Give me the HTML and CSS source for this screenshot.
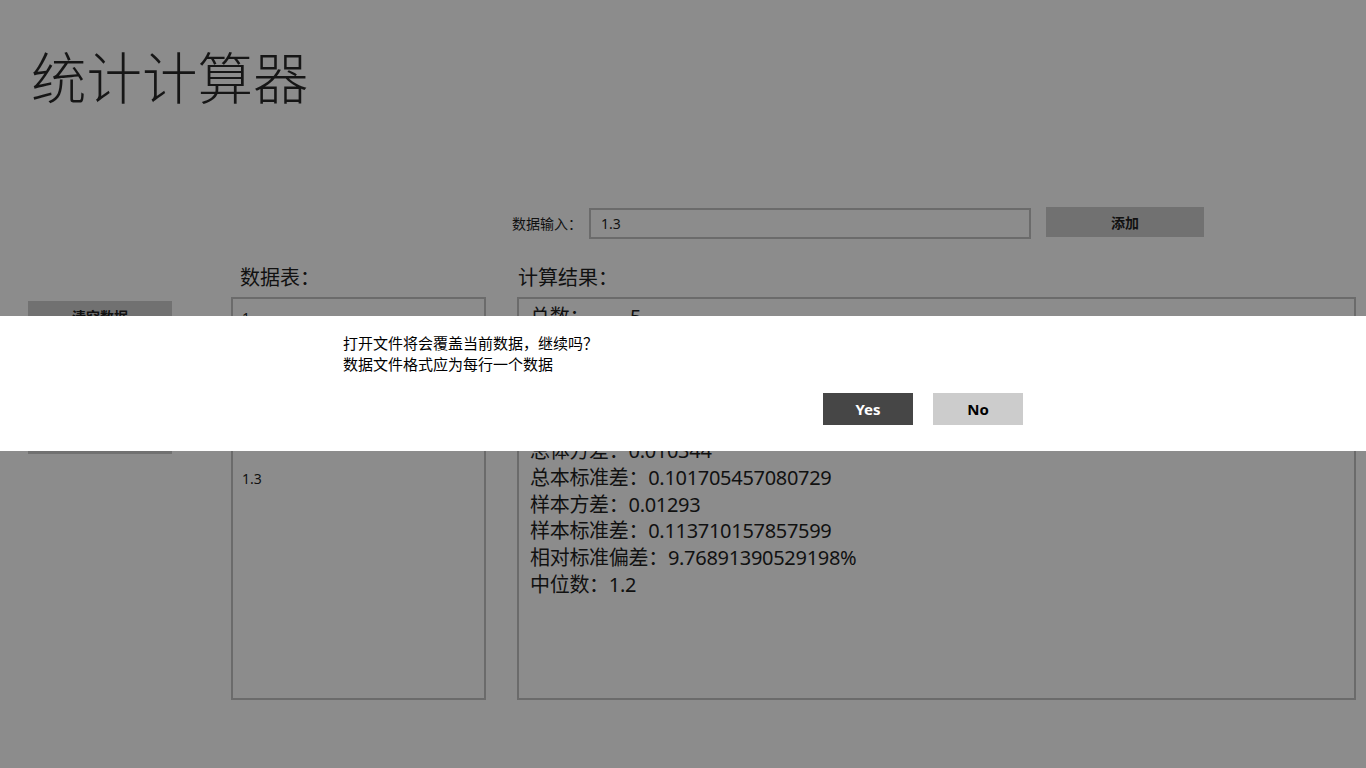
FILE: index.html
```html
<!doctype html>
<html>
  <head>
    <meta charset="utf-8">
    <title>统计计算器</title>
    <link rel="stylesheet" href="styles.css">
  </head>
  <body>
    <h1 class="title">统计计算器</h1>

    <div class="main">
      <div class="input-row">
        <label class="input-label" for="dataInput">数据输入：</label>
        <input class="data-input" id="dataInput" type="text" value="1.3">
        <button class="add-button">添加</button>
      </div>

      <div class="side-buttons">
        <button class="side-button">清空数据</button>
        <button class="side-button">删除选中</button>
        <button class="side-button">打开文件</button>
        <button class="side-button">保存文件</button>
      </div>

      <h2 class="panel-title list-title">数据表：</h2>
      <div class="box data-list">
        <div class="list-item">1</div>
        <div class="list-item">1.2</div>
        <div class="list-item">1.11</div>
        <div class="list-item">1.21</div>
        <div class="list-item">1.3</div>
      </div>

      <h2 class="panel-title result-title">计算结果：</h2>
      <div class="box results">
        <div class="result-line">总数：<span class="count-value">5</span></div>
        <div class="result-line">总和：5.82</div>
        <div class="result-line">平均数：1.164</div>
        <div class="result-line">最大值：1.3</div>
        <div class="result-line">最小值：1</div>
        <div class="result-line">总体方差：0.010344</div>
        <div class="result-line">总本标准差：0.101705457080729</div>
        <div class="result-line">样本方差：0.01293</div>
        <div class="result-line">样本标准差：0.113710157857599</div>
        <div class="result-line">相对标准偏差：9.76891390529198%</div>
        <div class="result-line">中位数：1.2</div>
      </div>
    </div>

    <div class="dialog">
      <div class="dialog-content">
        <p class="dialog-message">打开文件将会覆盖当前数据，继续吗？</p>
        <p class="dialog-message">数据文件格式应为每行一个数据</p>
        <div class="dialog-actions">
          <button class="dialog-button yes-button">Yes</button>
          <button class="dialog-button no-button">No</button>
        </div>
      </div>
    </div>
  </body>
</html>
```

FILE: styles.css
```css
body {
  margin: 0;
  padding: 0;
  height: 768px;
  overflow: hidden;
  background-color: #8c8c8c;
  color: #111;
  font-family: "Noto Sans", "Noto Sans CJK SC", sans-serif;
}
button {
  font-family: "Noto Sans", "Noto Sans CJK SC", sans-serif;
}
.title {
  margin: 0;
  padding: 49px 0 0 31px;
  font-size: 55.5px;
  line-height: 58px;
  font-weight: 300;
  color: #161616;
}
.main {
  display: grid;
  grid-template-columns: 144px 59px 255px 31px 839px;
  grid-template-rows: 32px auto 403px;
  margin-top: 100px;
  padding-left: 28px;
}
.input-row {
  grid-column: 5;
  grid-row: 1;
  display: flex;
  align-items: flex-start;
  margin-left: -5px;
}
.input-label {
  width: 77px;
  font-size: 14px;
  line-height: 32px;
  margin-top: 1px;
}
.data-input {
  width: 442px;
  height: 31px;
  margin: 1px 0 0 0;
  box-sizing: border-box;
  border: 2px solid #6b6b6b;
  background-color: transparent;
  padding: 0 10px;
  font-family: "Noto Sans", "Noto Sans CJK SC", sans-serif;
  font-size: 14px;
  color: #111;
  outline: none;
}
.add-button {
  width: 158px;
  height: 30px;
  margin-left: 15px;
  border: none;
  background-color: #717171;
  color: #111;
  font-size: 14px;
  font-weight: bold;
}
.side-buttons {
  grid-column: 1;
  grid-row: 3;
  display: flex;
  flex-direction: column;
  gap: 11px;
  padding-top: 4px;
}
.side-button {
  height: 30px;
  border: none;
  background-color: #717171;
  color: #111;
  font-size: 14px;
  font-weight: bold;
}
.panel-title {
  grid-row: 2;
  margin: 26px 0 6px 0;
  font-size: 20px;
  line-height: 26px;
  font-weight: normal;
}
.list-title {
  grid-column: 3;
  padding-left: 9px;
}
.result-title {
  grid-column: 5;
  padding-left: 1px;
}
.box {
  grid-row: 3;
  box-sizing: border-box;
  border: 2px solid #6b6b6b;
  height: 403px;
}
.data-list {
  grid-column: 3;
  padding: 9px 0 0 9px;
}
.list-item {
  font-size: 14px;
  line-height: 20px;
  margin-bottom: 20.25px;
}
.results {
  grid-column: 5;
  padding: 5px 0 0 11px;
}
.result-line {
  font-size: 20px;
  line-height: 26.8px;
  letter-spacing: -0.3px;
}
.count-value {
  padding-left: 41px;
}
.dialog {
  position: fixed;
  left: 0;
  right: 0;
  top: 316px;
  height: 135px;
  background-color: #fff;
}
.dialog-content {
  width: 680px;
  margin: 0 auto;
  padding-top: 17px;
}
.dialog-message {
  margin: 0;
  font-size: 15px;
  line-height: 20.5px;
  color: #000;
}
.dialog-actions {
  display: flex;
  justify-content: flex-end;
  gap: 20px;
  margin-top: 19px;
}
.dialog-button {
  width: 90px;
  height: 32px;
  border: none;
  font-size: 15px;
  font-weight: bold;
}
.yes-button {
  background-color: #464646;
  color: #fff;
}
.no-button {
  background-color: #cccccc;
  color: #000;
}
```
